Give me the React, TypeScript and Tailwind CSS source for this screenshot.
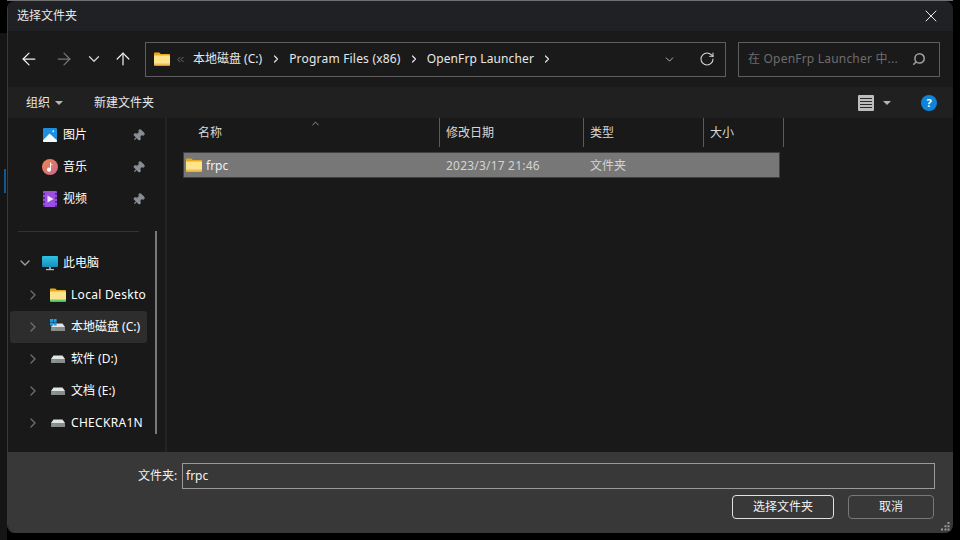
import React from 'react';
import { ArrowLeft, ArrowRight, ArrowUp, ChevronDown, ChevronRight, ChevronUp, ChevronsLeft, Pin, RotateCw, Search, X } from 'lucide-react';

const FONT = "font-['Noto_Sans','Noto_Sans_CJK_SC',sans-serif]";

const FolderIcon: React.FC<{ green?: boolean }> = ({ green }) => (
  <svg width="16" height="16" viewBox="0 0 16 16" className="shrink-0">
    <path d="M0 2.5C0 1.9.4 1.5 1 1.5h4.2l1.6 1.6H15c.6 0 1 .4 1 1V5H0z" fill="#eaa91d" />
    <path d="M0 4.4h15c.6 0 1 .4 1 1v8.1c0 .6-.4 1-1 1H1c-.6 0-1-.4-1-1z" fill="#fde48c" />
    <path d="M0 12.6h16v.9c0 .6-.4 1-1 1H1c-.6 0-1-.4-1-1z" fill={green ? '#5fd36a' : '#f0c04e'} />
  </svg>
);

const PicturesIcon = () => (
  <svg width="14" height="14" viewBox="0 0 15 15" className="shrink-0">
    <rect width="15" height="15" rx="1" fill="#1c8fe0" />
    <path d="M0 13l7-7 8 7v1a1 1 0 0 1-1 1H1a1 1 0 0 1-1-1z" fill="#f3f8fc" />
    <circle cx="11" cy="3.5" r="1" fill="#e6f3ff" />
  </svg>
);

const MusicIcon = () => (
  <svg width="16" height="16" viewBox="0 0 16 16" className="shrink-0">
    <defs>
      <linearGradient id="mus" x1="0" y1="0" x2="1" y2="1">
        <stop offset="0" stopColor="#f0884e" />
        <stop offset="1" stopColor="#c7668f" />
      </linearGradient>
    </defs>
    <circle cx="8" cy="8" r="8" fill="url(#mus)" />
    <path d="M8 3.5h1v7.2a2 2 0 1 1-1-1.7z" fill="#fff" />
    <path d="M8.5 3.5c.3 1.6 2.2 1.7 2.5 3.2-.9-.8-1.7-1-2.5-1z" fill="#fff" />
  </svg>
);

const VideoIcon = () => (
  <svg width="14" height="16" viewBox="0 0 14 16" className="shrink-0">
    <rect width="14" height="16" rx="1" fill="#9a4fe0" />
    <path d="M0 2h2v2H0zM0 6h2v2H0zM0 10h2v2H0zM0 14h2v2H0zM12 2h2v2h-2zM12 6h2v2h-2zM12 10h2v2h-2zM12 14h2v2h-2z" fill="#5c2a99" />
    <path d="M4.5 4.5l6 3.5-6 3.5z" fill="#ece2fa" />
  </svg>
);

const MonitorIcon = () => (
  <svg width="16" height="16" viewBox="0 0 16 16" className="shrink-0">
    <defs>
      <linearGradient id="mon" x1="0" y1="0" x2="0" y2="1">
        <stop offset="0" stopColor="#2cc3e6" />
        <stop offset="1" stopColor="#1a8fb8" />
      </linearGradient>
    </defs>
    <rect x="0" y="1" width="16" height="11" rx="1" fill="url(#mon)" />
    <rect x="7" y="12" width="2" height="2" fill="#8a9aa3" />
    <rect x="4" y="14" width="8" height="1.2" fill="#b5c0c6" />
  </svg>
);

const DriveIcon: React.FC<{ win?: boolean }> = ({ win }) => (
  <svg width="16" height="16" viewBox="0 0 16 16" className="shrink-0">
    <path d="M3.5 4.5h9l2.5 3.5H1z" fill="#e4e4e4" />
    <rect x="1" y="8" width="14" height="4" rx=".6" fill="#8b8b8b" />
    <rect x="3" y="9.5" width="2" height="1" fill="#4fdc6a" />
    {win && <path d="M0 0h3v3H0zM3.6 0h3v3h-3zM0 3.6h3v3H0zM3.6 3.6h3v3h-3z" fill="#1b9be8" />}
  </svg>
);

const ViewIcon = () => (
  <svg width="16" height="16" viewBox="0 0 16 16" className="shrink-0">
    <rect width="16" height="16" rx="1" fill="#bdbdbd" />
    <path d="M2 3h12v1H2zM2 6h12v1H2zM2 9h12v1H2zM2 12h12v1H2z" fill="#2a2a2a" />
  </svg>
);

const Caret: React.FC<{ className?: string }> = ({ className }) => (
  <span className={`block h-0 w-0 border-x-4 border-t-4 border-x-transparent border-t-[#b5b5b5] ${className ?? ''}`} />
);

const PinnedRow: React.FC<{ icon: React.ReactNode; label: string }> = ({ icon, label }) => (
  <div className="flex h-8 items-center pl-[32px] pr-[2px]">
    <span className="flex w-4 justify-center">{icon}</span>
    <span className="ml-[5px] text-white">{label}</span>
    <Pin size={13} className="ml-auto rotate-45 fill-[#8a8f94] text-[#8a8f94]" />
  </div>
);

const TreeRow: React.FC<{ icon: React.ReactNode; label: string; active?: boolean; latin?: boolean }> = ({ icon, label, active, latin }) => (
  <div className={`flex h-8 items-center overflow-hidden rounded-[3px] pl-[15px] ${active ? 'bg-[#2d2d2d]' : ''}`}>
    <ChevronRight size={16} strokeWidth={2} className="shrink-0 text-[#6e6e6e]" />
    <span className="ml-[9px]">{icon}</span>
    <span className={`ml-[5px] whitespace-nowrap text-white ${latin ? 'tracking-[0.3px]' : ''}`}>{label}</span>
  </div>
);

const Crumb: React.FC<{ label: string; className?: string }> = ({ label, className }) => (
  <>
    <span className={`whitespace-nowrap text-[#e8e8e8] ${className ?? ''}`}>{label}</span>
    <ChevronRight size={12} strokeWidth={2.5} className="mx-[7px] text-[#e0e0e0]" />
  </>
);

export default function App() {
  return (
    <div className={`flex h-[540px] w-[960px] overflow-hidden bg-black text-xs text-white ${FONT}`}>
      {/* app behind the dialog */}
      <div className="mt-[33px] h-[507px] w-[7px] bg-[#151515] pl-1 pt-[136px]">
        <div className="h-6 w-[2px] bg-[#0a5a96]" />
      </div>

      <div className="flex w-[946px] flex-col">
        <div className="h-px bg-[#6f6f6f]" />
        <div className="flex h-[532px] flex-col overflow-hidden rounded-t-lg rounded-b-lg border-l border-[#3a3a3a]">
          {/* title bar */}
          <div className="flex h-[30px] shrink-0 items-center justify-between bg-[#1f2125] pl-[9px] pr-[12px]">
            <span className="text-[#e8e8e8]">选择文件夹</span>
            <X size={20} strokeWidth={1.1} className="text-white" />
          </div>

          {/* navigation bar */}
          <div className="flex h-[56px] shrink-0 items-center bg-[#1a1a1a] pl-[11px]">
            <ArrowLeft size={20} strokeWidth={1.5} className="text-[#eeeeee]" />
            <ArrowRight size={20} strokeWidth={1.5} className="ml-[15px] text-[#777777]" />
            <ChevronDown size={18} strokeWidth={1.7} className="ml-[11px] text-[#d0d0d0]" />
            <ArrowUp size={20} strokeWidth={1.5} className="ml-[10px] text-[#eeeeee]" />
            <div className="ml-[12px] flex h-[35px] w-[581px] items-center border border-[#5e5e5e] pl-2">
              <FolderIcon />
              <ChevronsLeft size={11} className="ml-[5px] text-[#777777]" />
              <span className="ml-[7px]" />
              <Crumb label="本地磁盘 (C:)" className="mr-px" />
              <Crumb label="Program Files (x86)" className="tracking-[0.2px]" />
              <Crumb label="OpenFrp Launcher" className="tracking-[0.12px]" />
              <ChevronDown size={13} strokeWidth={1.6} className="ml-[103px] text-[#cccccc]" />
              <RotateCw size={16} strokeWidth={1.6} className="ml-[23px] text-[#d8d8d8]" />
            </div>
            <div className="ml-[12px] flex h-[35px] w-[202px] items-center justify-between border border-[#5e5e5e] pl-[9px] pr-[13px]">
              <span className="whitespace-nowrap tracking-[0.2px] text-[#6d6d6d]">在 OpenFrp Launcher 中...</span>
              <Search size={14} strokeWidth={2.6} className="-scale-x-100 text-[#a0a0a0]" />
            </div>
          </div>

          {/* toolbar */}
          <div className="flex h-[31px] shrink-0 items-center bg-[#202020] pl-[18px] pr-[16px]">
            <span className="text-[#e8e8e8]">组织</span>
            <Caret className="ml-[5px]" />
            <span className="ml-[31px] text-[#e8e8e8]">新建文件夹</span>
            <span className="ml-auto"><ViewIcon /></span>
            <Caret className="ml-[9px] mr-[30px]" />
            <span className="flex h-4 w-4 items-center justify-center rounded-full bg-[#0f84d8] text-[11px] font-bold leading-none text-white">?</span>
          </div>

          {/* body */}
          <div className="flex min-h-0 flex-1 bg-[#191919]">
            <div className="flex w-[159px] shrink-0 border-r-2 border-[#242424]">
              <div className="ml-[2px] mt-px w-[137px] shrink-0">
                <PinnedRow icon={<PicturesIcon />} label="图片" />
                <PinnedRow icon={<MusicIcon />} label="音乐" />
                <PinnedRow icon={<VideoIcon />} label="视频" />
                <div className="ml-2 mt-4 h-px w-[121px] bg-[#333333]" />
                <div className="mt-[15px] flex h-8 items-center pl-[7px]">
                  <ChevronDown size={16} strokeWidth={2} className="text-[#a0a0a0]" />
                  <span className="ml-[9px]"><MonitorIcon /></span>
                  <span className="ml-[5px] text-white">此电脑</span>
                </div>
                <TreeRow icon={<FolderIcon green />} label="Local Deskto" latin />
                <TreeRow icon={<DriveIcon win />} label="本地磁盘 (C:)" active />
                <TreeRow icon={<DriveIcon />} label="软件 (D:)" />
                <TreeRow icon={<DriveIcon />} label="文档 (E:)" />
                <TreeRow icon={<DriveIcon />} label="CHECKRA1N" latin />
              </div>
              <div className="ml-2 mt-[113px] h-[203px] w-[2px] bg-[#7a7a7a]" />
            </div>

            <div className="min-w-0 flex-1">
              <div className="relative flex h-[29px] text-[#d8d8d8]">
                <ChevronUp size={11} className="absolute left-[143px] top-0 text-[#a0a0a0]" />
                <div className="flex w-[273px] items-center border-r border-[#5a5a5a] pl-[31px]">名称</div>
                <div className="flex w-[144px] items-center border-r border-[#5a5a5a] pl-[6px]">修改日期</div>
                <div className="flex w-[120px] items-center border-r border-[#5a5a5a] pl-[6px]">类型</div>
                <div className="flex w-[80px] items-center border-r border-[#5a5a5a] pl-[6px]">大小</div>
              </div>
              <div className="ml-4 mt-[5px] flex h-[26px] w-[597px] items-center border border-[#3f3f3f] bg-[#777777] pl-[2px]">
                <FolderIcon />
                <span className="ml-[4px] mt-[2px] w-[240px] text-[#f0f0f0]">frpc</span>
                <span className="mt-[2px] w-[144px] tracking-[0.2px] text-[#d4d4d4]">2023/3/17 21:46</span>
                <span className="mt-[2px] text-[#d4d4d4]">文件夹</span>
              </div>
            </div>
          </div>

          {/* footer */}
          <div className="flex h-[81px] shrink-0 flex-col bg-[#383838] pl-[130px] pr-[18px] pt-[11px]">
            <div className="flex items-center">
              <span className="w-11 text-[#f0f0f0]">文件夹:</span>
              <div className="flex h-[26px] flex-1 items-center border border-[#9a9a9a] px-[3px] text-[#f0f0f0]">frpc</div>
            </div>
            <div className="mt-[6px] flex justify-end pr-px">
              <button className="h-6 w-[102px] rounded-[4px] border border-[#e0e0e0] text-[#f0f0f0]">选择文件夹</button>
              <button className="ml-[14px] h-6 w-[86px] rounded-[4px] border border-[#777777] text-[#f0f0f0]">取消</button>
            </div>
            <div className="mr-[-15px] mt-[3px] flex justify-end">
              <svg width="9" height="9" viewBox="0 0 9 9">
                <path d="M6.5 0h2v2h-2zM3.5 3.3h2v2h-2zM6.5 3.3h2v2h-2zM0 6.6h2v2H0zM3.5 6.6h2v2h-2zM6.5 6.6h2v2h-2z" fill="#9a9a9a" />
              </svg>
            </div>
          </div>
        </div>
      </div>
    </div>
  );
}
